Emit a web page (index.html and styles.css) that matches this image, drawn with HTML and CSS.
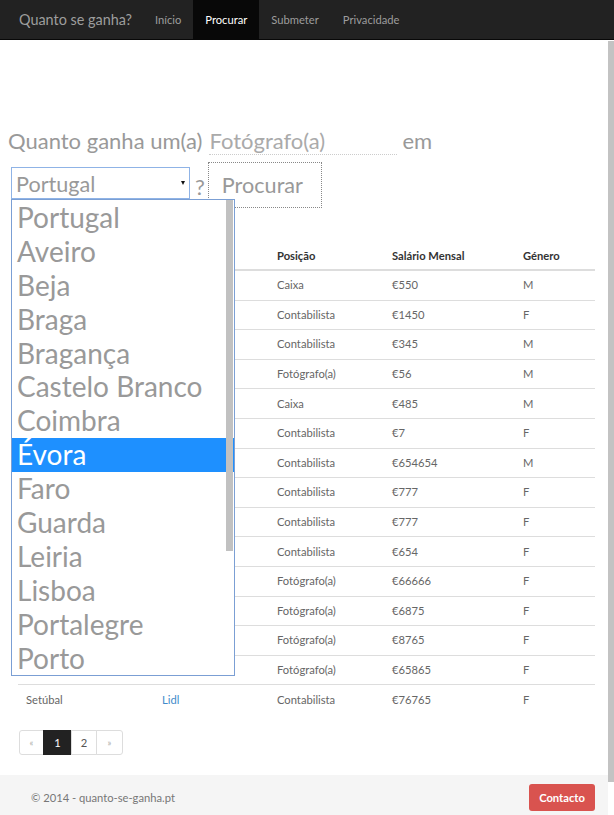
FILE: index.html
```html
<!DOCTYPE html>
<html lang="pt">
<head>
<meta charset="utf-8">
<title>Quanto se ganha?</title>
<link rel="stylesheet" href="styles.css">
</head>
<body>
<nav class="navbar">
  <a class="brand" href="#">Quanto se ganha?</a>
  <ul class="nav-links">
    <li><a href="#">Início</a></li>
    <li class="active"><a href="#">Procurar</a></li>
    <li><a href="#">Submeter</a></li>
    <li><a href="#">Privacidade</a></li>
  </ul>
</nav>

<section class="search">
  <div class="q-line">
    <span class="lbl">Quanto ganha um(a)</span>
    <input class="job" type="text" value="Fotógrafo(a)">
    <span class="lbl em">em</span>
  </div>
  <div class="q-line second">
    <div class="select">
      <span class="select-value">Portugal</span>
      <span class="arrow"></span>
      <div class="dropdown">
        <ul class="options">
          <li>Portugal</li>
          <li>Aveiro</li>
          <li>Beja</li>
          <li>Braga</li>
          <li>Bragança</li>
          <li>Castelo Branco</li>
          <li>Coimbra</li>
          <li class="selected">Évora</li>
          <li>Faro</li>
          <li>Guarda</li>
          <li>Leiria</li>
          <li>Lisboa</li>
          <li>Portalegre</li>
          <li>Porto</li>
        </ul>
        <div class="thumb"></div>
      </div>
    </div>
    <span class="lbl qmark">?</span>
    <button class="btn-search" type="button">Procurar</button>
  </div>
</section>

<main class="container">
  <table class="results">
    <thead>
      <tr><th class="c1">Distrito</th><th class="c2">Empresa</th><th class="c3">Posição</th><th class="c4">Salário Mensal</th><th class="c5">Género</th></tr>
    </thead>
    <tbody>
      <tr><td>Lisboa</td><td><a href="#">Pingo Doce</a></td><td>Caixa</td><td>€550</td><td>M</td></tr>
      <tr><td>Porto</td><td><a href="#">Sonae</a></td><td>Contabilista</td><td>€1450</td><td>F</td></tr>
      <tr><td>Braga</td><td><a href="#">EDP</a></td><td>Contabilista</td><td>€345</td><td>M</td></tr>
      <tr><td>Aveiro</td><td><a href="#">Foto Lda</a></td><td>Fotógrafo(a)</td><td>€56</td><td>M</td></tr>
      <tr><td>Faro</td><td><a href="#">Continente</a></td><td>Caixa</td><td>€485</td><td>M</td></tr>
      <tr><td>Leiria</td><td><a href="#">Lidl</a></td><td>Contabilista</td><td>€7</td><td>F</td></tr>
      <tr><td>Coimbra</td><td><a href="#">Lidl</a></td><td>Contabilista</td><td>€654654</td><td>M</td></tr>
      <tr><td>Guarda</td><td><a href="#">Lidl</a></td><td>Contabilista</td><td>€777</td><td>F</td></tr>
      <tr><td>Beja</td><td><a href="#">Lidl</a></td><td>Contabilista</td><td>€777</td><td>F</td></tr>
      <tr><td>Évora</td><td><a href="#">Lidl</a></td><td>Contabilista</td><td>€654</td><td>F</td></tr>
      <tr><td>Lisboa</td><td><a href="#">Lidl</a></td><td>Fotógrafo(a)</td><td>€66666</td><td>F</td></tr>
      <tr><td>Porto</td><td><a href="#">Lidl</a></td><td>Fotógrafo(a)</td><td>€6875</td><td>F</td></tr>
      <tr><td>Viseu</td><td><a href="#">Lidl</a></td><td>Fotógrafo(a)</td><td>€8765</td><td>F</td></tr>
      <tr><td>Santarém</td><td><a href="#">Lidl</a></td><td>Fotógrafo(a)</td><td>€65865</td><td>F</td></tr>
      <tr><td>Setúbal</td><td><a href="#">Lidl</a></td><td>Contabilista</td><td>€76765</td><td>F</td></tr>
    </tbody>
  </table>

  <ul class="pagination">
    <li class="disabled"><span>«</span></li>
    <li class="active"><span>1</span></li>
    <li><a href="#">2</a></li>
    <li class="next"><a href="#">»</a></li>
  </ul>
</main>

<footer class="footer">
  <span class="copy">© 2014 - quanto-se-ganha.pt</span>
  <a class="btn-contact" href="#">Contacto</a>
</footer>

<div class="page-scrollbar"></div>
</body>
</html>
```

FILE: styles.css
```css
* { box-sizing: border-box; }

html, body {
  margin: 0;
  padding: 0;
}

body {
  width: 614px;
  font-family: Lato, "Liberation Sans", sans-serif;
  font-size: 11.2px;
  line-height: 16px;
  color: #666;
  background: #fff;
  overflow: hidden;
}

/* navbar */
.navbar {
  display: flex;
  height: 40px;
  background: #222;
  border-bottom: 1px solid #080808;
}

.brand {
  display: flex;
  align-items: center;
  padding: 0 11px 0 19px;
  font-size: 14.4px;
  color: #9d9d9d;
  text-decoration: none;
}

.nav-links {
  display: flex;
  list-style: none;
  margin: 0;
  padding: 0;
}

.nav-links a {
  display: flex;
  align-items: center;
  height: 39px;
  padding: 0 12px;
  color: #9d9d9d;
  text-decoration: none;
}

.nav-links .active a {
  background: #080808;
  color: #fff;
}

/* search form */
.search {
  padding: 87px 0 0 8px;
  font-size: 22px;
  line-height: 28px;
  color: #999;
}

.q-line {
  display: flex;
  align-items: center;
  height: 28px;
}

.job {
  width: 188px;
  height: 28px;
  margin-left: 7px;
  padding: 0;
  border: none;
  border-bottom: 1px dotted #ccc;
  font: inherit;
  color: #aaa;
  background: transparent;
  outline: none;
}

.em { margin-left: 5px; }

.q-line.second {
  align-items: flex-start;
  height: 46px;
  margin-top: 7px;
}

.select {
  position: relative;
  display: flex;
  align-items: center;
  justify-content: space-between;
  width: 179px;
  height: 32px;
  margin: 5px 0 0 3px;
  padding: 1px 4px 0 4px;
  border: 1px solid #8fb3e6;
  background: #fff;
  color: #999;
  font-size: 21.6px;
}

.arrow {
  width: 0;
  height: 0;
  margin-top: -2px;
  border-left: 2.5px solid transparent;
  border-right: 2.5px solid transparent;
  border-top: 4px solid #111;
}

.dropdown {
  position: absolute;
  top: 31px;
  left: -1px;
  width: 224px;
  height: 477px;
  border: 1px solid #7b9fd4;
  background: #fff;
  z-index: 10;
  overflow: hidden;
}

.options {
  list-style: none;
  margin: 0;
  padding: 1px 0 0 0;
}

.options li {
  height: 33.9px;
  padding-left: 5px;
  font-size: 28px;
  line-height: 33.9px;
  color: #999;
  white-space: nowrap;
}

.options li.selected {
  background: #1e90ff;
  color: #fff;
}

.thumb {
  position: absolute;
  top: 0;
  right: 1px;
  width: 7px;
  height: 351px;
  background: #c1c1c1;
}

.qmark {
  margin-left: 5px;
  line-height: 50px;
}

.btn-search {
  width: 114px;
  height: 46px;
  margin-left: 3px;
  padding: 0 0 0 13px;
  border: 1px dotted #888;
  background: transparent;
  font: inherit;
  font-size: 21.6px;
  color: #999;
  text-align: left;
}

/* table */
.container {
  padding: 0 19px 0 18px;
}

.results {
  width: 577px;
  margin-top: 34px;
  border-collapse: collapse;
  table-layout: fixed;
}

.results .c1 { width: 136px; }
.results .c2 { width: 115px; }
.results .c3 { width: 115px; }
.results .c4 { width: 131px; }
.results .c5 { width: 80px; }

.results th {
  padding: 6.4px 8px 4.6px;
  text-align: left;
  font-weight: 700;
  color: #333;
  border-bottom: 2px solid #ddd;
}

.results td {
  padding: 6.3px 8px;
  border-top: 1px solid #ddd;
  color: #666;
}

.results a {
  color: #428bca;
  text-decoration: none;
}

/* pagination */
.pagination {
  display: flex;
  list-style: none;
  margin: 16px 0 20px 1px;
  padding: 0;
}

.pagination li > * {
  display: flex;
  align-items: center;
  justify-content: center;
  width: 26px;
  height: 25.6px;
  margin-left: -1px;
  border: 1px solid #ddd;
  background: #fff;
  color: #555;
  text-decoration: none;
}

.pagination li:first-child > * {
  margin-left: 0;
  width: 25px;
  border-radius: 3px 0 0 3px;
}

.pagination li:last-child > * {
  width: 27px;
  border-radius: 0 3px 3px 0;
}

.pagination .disabled > *,
.pagination .next > * {
  color: #aaa;
  font-size: 9px;
}

.pagination .active > * {
  background: #222;
  border-color: #222;
  color: #fff;
  width: 29px;
}

/* footer */
.footer {
  display: flex;
  align-items: flex-start;
  justify-content: space-between;
  width: 608px;
  height: 60px;
  padding: 0 13px 0 31px;
  background: #f5f5f5;
}

.copy {
  margin-top: 15px;
  color: #777;
}

.btn-contact {
  display: flex;
  align-items: center;
  justify-content: center;
  width: 66px;
  height: 27px;
  margin-top: 9px;
  border-radius: 3px;
  background: #d9534f;
  color: #fff;
  font-weight: 700;
  text-decoration: none;
}

/* page scrollbar */
.page-scrollbar {
  position: fixed;
  top: 41px;
  left: 608px;
  width: 6px;
  height: 741px;
  background: #c3c3c3;
}
```
